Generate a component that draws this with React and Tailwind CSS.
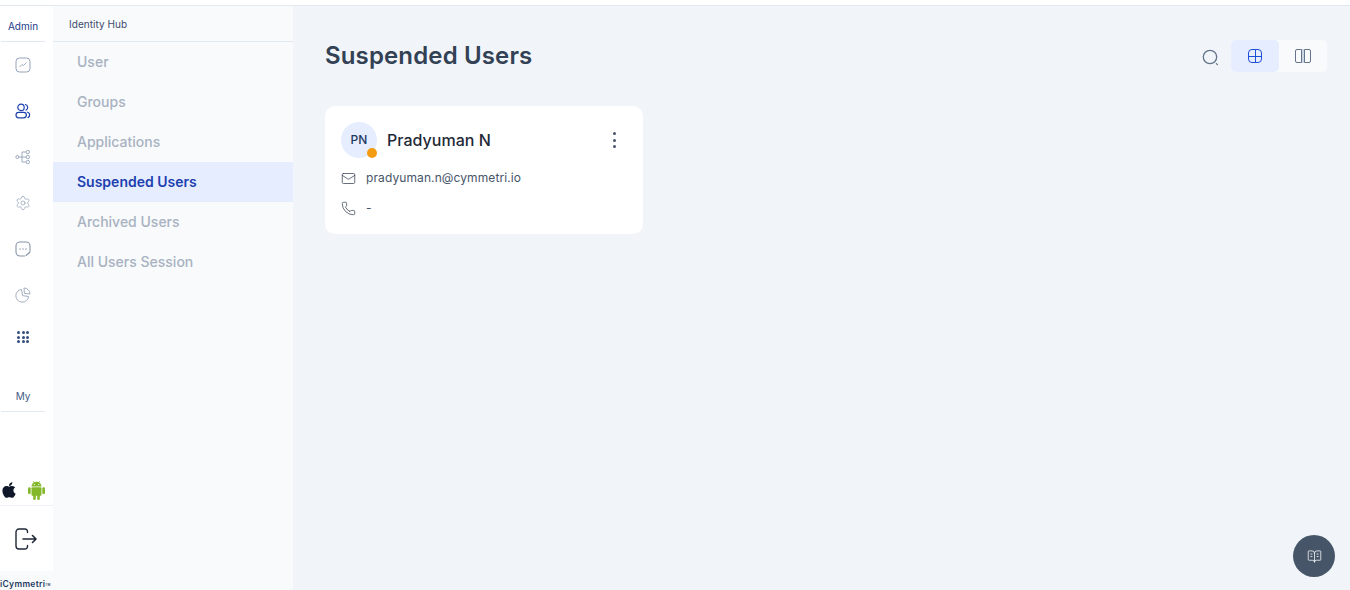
import { Mail, Phone, Settings, BookOpenText } from 'lucide-react';
import { FaApple } from 'react-icons/fa';

const menu = ['User', 'Groups', 'Applications', 'Suspended Users', 'Archived Users', 'All Users Session'];

function RailIcon({ children }) {
  return <div className="h-[46px] flex items-center justify-center">{children}</div>;
}

function ChartBox() {
  return (
    <svg width="16" height="16" viewBox="0 0 16 16" fill="none" stroke="#94a3b8" strokeWidth="1">
      <rect x="1" y="1" width="14" height="14" rx="3.5" />
      <path d="M4.5 10 L7 7.5 L8.5 8.5 L11.5 5.5" strokeWidth="0.9" />
    </svg>
  );
}

function UsersIcon() {
  return (
    <svg width="16" height="16" viewBox="0 0 16 16" fill="none" stroke="#1e40af" strokeWidth="1.2" strokeLinecap="round">
      <circle cx="6" cy="4.4" r="3.2" />
      <rect x="1" y="9.3" width="10.4" height="5.5" rx="2.75" />
      <path d="M10.4 1.5a3 3 0 0 1 .6 5.6" />
      <path d="M12.6 9.2a2.9 2.9 0 0 1 .4 5.4" />
    </svg>
  );
}

function TreeIcon() {
  return (
    <svg width="16" height="16" viewBox="0 0 16 16" fill="none" stroke="#94a3b8" strokeWidth="0.9">
      <circle cx="2.3" cy="8" r="1.5" />
      <path d="M3.8 8 H11 M7 3 V13 M7 3 H11 M7 13 H11" />
      <circle cx="12.8" cy="3" r="1.7" />
      <circle cx="12.8" cy="8" r="1.7" />
      <circle cx="12.8" cy="13" r="1.7" />
    </svg>
  );
}

function ChatIcon() {
  return (
    <svg width="16" height="16" viewBox="0 0 16 16" fill="none" stroke="#8694a8" strokeWidth="1.1" strokeLinecap="round">
      <path d="M9.5 15 H5 a4 4 0 0 1-4-4 V5 a4 4 0 0 1 4-4 h6 a4 4 0 0 1 4 4 v5" />
      <path d="M11 14.5 L15 11" />
      <path d="M5 8h.01 M8 8h.01 M11 8h.01" strokeWidth="1.4" />
    </svg>
  );
}

function PieIcon() {
  return (
    <svg width="16" height="16" viewBox="0 0 16 16" fill="none" stroke="#a3afc0" strokeWidth="1">
      <path d="M6.5 2.4 a6.4 6.4 0 1 0 7.1 7.1 L7.5 8.6 Z" />
      <path d="M9 1 a6 6 0 0 1 6 6 L9.4 6.4 Z" />
    </svg>
  );
}

function DotsGrid() {
  return (
    <div className="grid grid-cols-3 gap-[1.6px] w-[12px]">
      {[1, 2, 3, 4, 5, 6, 7, 8, 9].map((d) => (
        <span key={d} className="w-[3px] h-[3px] rounded-full bg-[#334e7e]" />
      ))}
    </div>
  );
}

function AndroidIcon() {
  return (
    <svg width="17" height="20" viewBox="0 0 17 20" fill="#84b82b">
      <path d="M3.5 6.6 a5 4.8 0 0 1 10 0 Z" />
      <path d="M5 1 L6.4 3 M12 1 L10.6 3" stroke="#84b82b" strokeWidth="0.7" />
      <rect x="3.5" y="7.2" width="10" height="8.6" rx="1" />
      <rect x="0" y="7.2" width="2.7" height="7" rx="1.35" />
      <rect x="14.3" y="7.2" width="2.7" height="7" rx="1.35" />
      <rect x="5.2" y="14" width="2.6" height="6" rx="1.3" />
      <rect x="9.2" y="14" width="2.6" height="6" rx="1.3" />
      <circle cx="6.3" cy="4.6" r="0.6" fill="#fff" />
      <circle cx="10.7" cy="4.6" r="0.6" fill="#fff" />
    </svg>
  );
}

function LogoutIcon() {
  return (
    <svg width="22" height="22" viewBox="0 0 22 22" fill="none" stroke="#1f2937" strokeWidth="1.4" strokeLinecap="round" strokeLinejoin="round">
      <path d="M12.5 4.5 V3.5 a2.5 2.5 0 0 0-2.5-2.5 H4 a3 3 0 0 0-3 3 v14 a3 3 0 0 0 3 3 h6 a2.5 2.5 0 0 0 2.5-2.5 v-1" />
      <path d="M8 11 H21 M17.5 7.5 L21 11 L17.5 14.5" strokeWidth="1.6" />
    </svg>
  );
}

function SearchIcon() {
  return (
    <svg width="17" height="17" viewBox="0 0 17 17" fill="none" stroke="#64748b" strokeWidth="1.3" strokeLinecap="round">
      <circle cx="8" cy="8" r="6.7" />
      <path d="M14.4 14.6 L15.4 15.6" />
    </svg>
  );
}

function Rail() {
  return (
    <aside className="w-[53px] shrink-0 bg-white flex flex-col">
      <div className="w-[46px] shrink-0">
        <div className="h-[36px] mx-px border-b border-[#e2e8f0] flex items-center justify-center text-[10px] text-[#1e3a8a] pt-[6px]">Admin</div>
        <div className="flex flex-col">
          <RailIcon><ChartBox /></RailIcon>
          <RailIcon><UsersIcon /></RailIcon>
          <RailIcon><TreeIcon /></RailIcon>
          <RailIcon><Settings size={16} strokeWidth={1.1} className="text-[#94a3b8]" /></RailIcon>
          <RailIcon><ChatIcon /></RailIcon>
          <RailIcon><PieIcon /></RailIcon>
          <div className="h-[38px] flex items-center justify-center"><DotsGrid /></div>
        </div>
        <div className="mt-[26px] h-[30px] mx-px border-b border-[#e2e8f0] flex items-center justify-center text-[10px] text-[#475a82]">My</div>
      </div>
      <div className="mt-auto">
        <div className="h-[46px] flex items-end justify-between pl-[0px] pr-[8px] pb-[5px]">
          <FaApple size={18} className="text-[#0f172a] mb-[1px]" />
          <AndroidIcon />
        </div>
        <div className="h-[66px] border-t border-[#eef2f6] flex items-center justify-center pr-[1px]">
          <LogoutIcon />
        </div>
        <div className="h-[19px] bg-[#f8fafc] text-[8.5px] font-semibold tracking-[0.3px] text-[#1e3a5f] leading-[27px] whitespace-nowrap overflow-hidden">
          iCymmetri<sup className="text-[3px]">TM</sup>
        </div>
      </div>
    </aside>
  );
}

function SubMenu() {
  return (
    <aside className="w-[240px] shrink-0 bg-[#f8fafc] flex flex-col">
      <div className="h-[36px] border-b border-[#e2e8f0] flex items-center pl-[16px] pt-[2px] text-[10px] tracking-[0.05px] text-[#3b4a6b]">Identity Hub</div>
      <nav className="flex flex-col">
        {menu.map((m) => (
          <div
            key={m}
            className={m === 'Suspended Users'
              ? 'h-[40px] flex items-center pl-[24px] text-sm font-semibold text-[#1e40af] bg-[#e5edff]'
              : 'h-[40px] flex items-center pl-[24px] text-sm font-medium text-[#a8b2c1]'}
          >
            {m}
          </div>
        ))}
      </nav>
    </aside>
  );
}

function UserCard() {
  return (
    <div className="w-[318px] h-[128px] bg-white rounded-[10px] px-[16px] pt-[16px]">
      <div className="flex items-center">
        <div className="relative w-[36px] h-[36px] rounded-full bg-[#e5edff] flex items-center justify-center text-xs font-medium text-[#1e3a5f]">
          PN
          <span className="absolute right-0 bottom-0 w-[10px] h-[10px] rounded-full bg-[#f39c12]" />
        </div>
        <div className="ml-[10px] text-base font-medium tracking-[0.02px] text-[#1f2937]">Pradyuman N</div>
        <div className="ml-auto mr-[11px] flex flex-col gap-[3.5px]">
          <span className="w-[3px] h-[3px] rounded-full bg-[#475569]" />
          <span className="w-[3px] h-[3px] rounded-full bg-[#475569]" />
          <span className="w-[3px] h-[3px] rounded-full bg-[#475569]" />
        </div>
      </div>
      <div className="mt-[10px] h-[20px] flex items-center gap-[10px] text-xs tracking-[0.1px] text-[#475569]">
        <Mail size={15} strokeWidth={1.2} className="text-[#374151]" />
        <span>pradyuman.n@cymmetri.io</span>
      </div>
      <div className="mt-[10px] h-[20px] flex items-center gap-[10px] text-xs text-[#475569]">
        <Phone size={15} strokeWidth={1.2} className="text-[#374151]" />
        <span>-</span>
      </div>
    </div>
  );
}

function ViewSwitch() {
  return (
    <div className="flex items-center">
      <div className="mr-[12px] mt-[2px]"><SearchIcon /></div>
      <div className="flex bg-[#f8fafc] rounded-[5px]">
        <div className="w-[48px] h-[32px] bg-[#e5edff] rounded-[5px] flex items-center justify-center">
          <div className="relative w-[14px] h-[14px] border border-[#1d4ed8] rounded-[4px]">
            <div className="absolute left-[5.5px] top-0 bottom-0 w-px bg-[#1d4ed8]" />
            <div className="absolute top-[5.5px] left-0 right-0 h-px bg-[#1d4ed8]" />
          </div>
        </div>
        <div className="w-[48px] h-[32px] flex items-center justify-center">
          <div className="w-[7px] h-[14px] border border-[#64748b] rounded-l-[2px]" />
          <div className="w-[2px] h-[14px] bg-[#cbd5e1]" />
          <div className="w-[7px] h-[14px] border border-[#64748b] rounded-r-[2px]" />
        </div>
      </div>
    </div>
  );
}

export default function App() {
  return (
    <div className="relative w-[1350px] h-[590px] overflow-hidden bg-white font-['Inter',sans-serif]">
      <div className="h-[6px] bg-white border-b border-[#e2e8f0]" />
      <div className="flex h-[584px]">
        <Rail />
        <SubMenu />
        <main className="flex-1 bg-[#f1f5f9] pl-[32px] pr-[23px]">
          <div className="flex items-center justify-between pt-[34px]">
            <h1 className="text-2xl font-semibold tracking-[0.14px] text-[#334155] leading-[32px]">Suspended Users</h1>
            <ViewSwitch />
          </div>
          <div className="mt-[34px]">
            <UserCard />
          </div>
        </main>
      </div>
      <button className="absolute right-[15px] bottom-[13px] w-[42px] h-[42px] rounded-full bg-[#475569] flex items-center justify-center text-white">
        <BookOpenText size={15} strokeWidth={1.2} />
      </button>
    </div>
  );
}
